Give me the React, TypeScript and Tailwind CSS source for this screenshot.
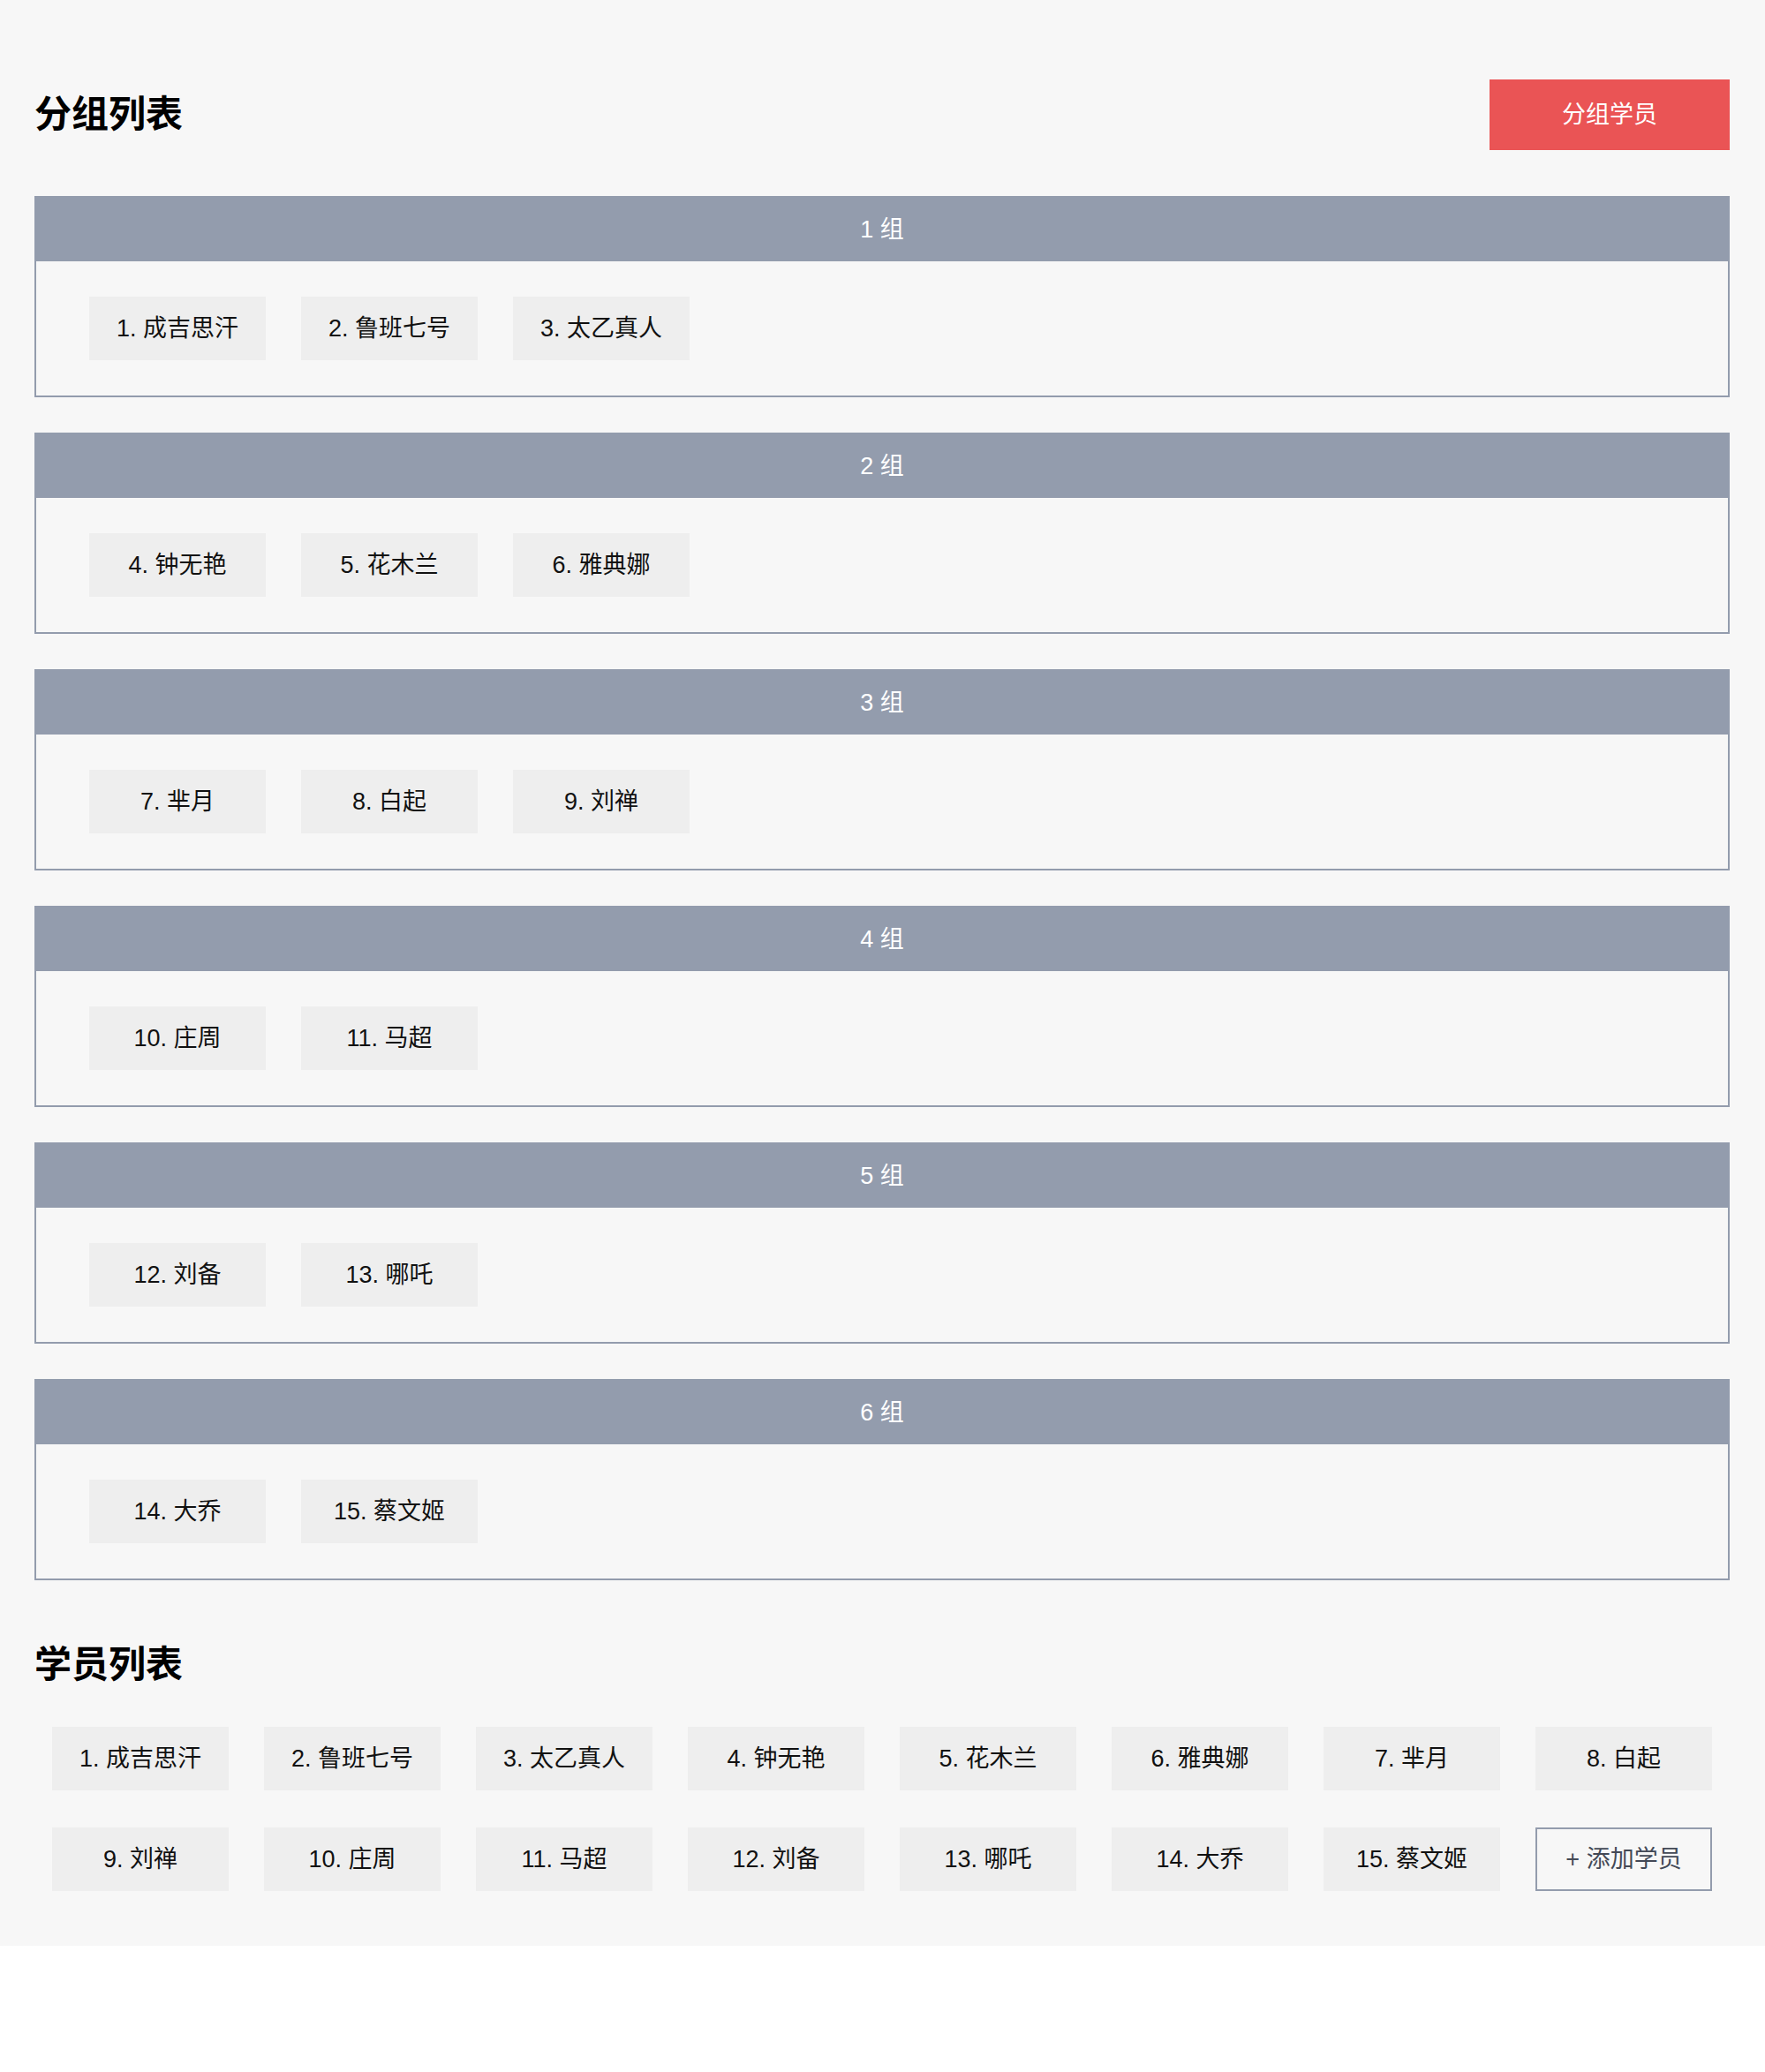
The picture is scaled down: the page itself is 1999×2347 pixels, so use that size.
import React from "react"

type Student = { id: number; name: string }

const students: Student[] = [
  { id: 1, name: "成吉思汗" },
  { id: 2, name: "鲁班七号" },
  { id: 3, name: "太乙真人" },
  { id: 4, name: "钟无艳" },
  { id: 5, name: "花木兰" },
  { id: 6, name: "雅典娜" },
  { id: 7, name: "芈月" },
  { id: 8, name: "白起" },
  { id: 9, name: "刘禅" },
  { id: 10, name: "庄周" },
  { id: 11, name: "马超" },
  { id: 12, name: "刘备" },
  { id: 13, name: "哪吒" },
  { id: 14, name: "大乔" },
  { id: 15, name: "蔡文姬" },
]

// students are split into groups of three, last groups get two
const groups: number[][] = [
  [1, 2, 3],
  [4, 5, 6],
  [7, 8, 9],
  [10, 11],
  [12, 13],
  [14, 15],
]

const fontStack = { fontFamily: '"Liberation Sans", "Noto Sans CJK SC", sans-serif' }

function StudentChip({ student }: { student: Student }) {
  return (
    <div className="w-[200px] h-[72px] flex items-center justify-center bg-[#eeeeee] text-[27px] text-[#111111]">
      {student.id}. {student.name}
    </div>
  )
}

export default function App() {
  const byId = (id: number) => students.find((s) => s.id === id)!

  return (
    <div className="bg-white min-h-screen" style={fontStack}>
      <main className="bg-[#f7f7f7] pt-[90px] pb-[62px]">
        <div className="w-[1920px] ml-[39px]">
          <div className="flex items-center justify-between h-[80px]">
            <h1 className="text-[42px] font-bold text-black leading-none">分组列表</h1>
            <button className="w-[272px] h-[80px] bg-[#ea5455] text-white text-[27px]">分组学员</button>
          </div>

          <div className="mt-[52px] flex flex-col gap-[40px]">
            {groups.map((ids, i) => (
              <div key={i} className="border-2 border-[#939cad]">
                <div className="h-[72px] bg-[#939cad] flex items-center justify-center text-white text-[27px]">
                  {i + 1} 组
                </div>
                <div className="py-[40px] px-[60px] flex gap-[40px]">
                  {ids.map((id) => (
                    <StudentChip key={id} student={byId(id)} />
                  ))}
                </div>
              </div>
            ))}
          </div>

          <div className="mt-[56px] h-[80px] flex items-center">
            <h2 className="text-[42px] font-bold text-black leading-none">学员列表</h2>
          </div>

          <div className="mt-[30px] px-[20px] flex flex-wrap gap-x-[40px] gap-y-[42px]">
            {students.map((s) => (
              <StudentChip key={s.id} student={s} />
            ))}
            <button className="w-[200px] h-[72px] flex items-center justify-center border-2 border-[#939cad] text-[27px] text-[#434956]">
              + 添加学员
            </button>
          </div>
        </div>
      </main>
    </div>
  )
}
